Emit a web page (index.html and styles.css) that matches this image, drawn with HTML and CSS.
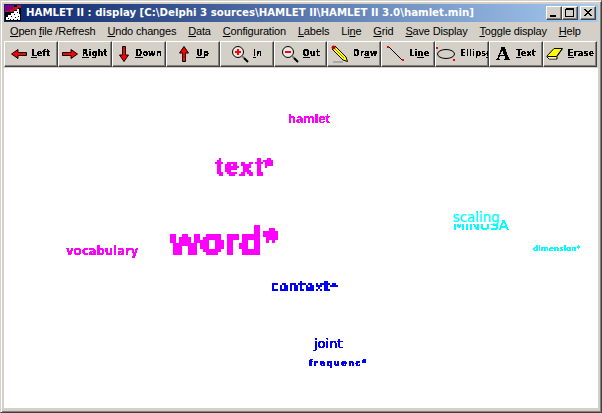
FILE: index.html
```html
<!DOCTYPE html>
<html lang="en">
<head>
<meta charset="utf-8">
<title>HAMLET II</title>
<link rel="stylesheet" href="styles.css">
</head>
<body>
<svg class="defs" width="0" height="0" aria-hidden="true">
  <defs>
    <filter id="hard" x="-5%" y="-5%" width="110%" height="110%" color-interpolation-filters="sRGB">
      <feComponentTransfer><feFuncA type="discrete" tableValues="0 1 1"/></feComponentTransfer>
    </filter>
    <filter id="px2" x="0" y="0" width="100%" height="100%" color-interpolation-filters="sRGB">
      <feFlood x="0" y="0" width="1" height="1" flood-color="#000"/>
      <feComposite width="2" height="2"/>
      <feTile result="grid"/>
      <feComposite in="SourceGraphic" in2="grid" operator="in" result="s"/>
      <feOffset in="s" dx="1" dy="0" result="s1"/>
      <feOffset in="s" dx="0" dy="1" result="s2"/>
      <feOffset in="s" dx="1" dy="1" result="s3"/>
      <feMerge><feMergeNode in="s"/><feMergeNode in="s1"/><feMergeNode in="s2"/><feMergeNode in="s3"/></feMerge>
      <feComponentTransfer><feFuncA type="discrete" tableValues="0 1 1"/></feComponentTransfer>
    </filter>
    <filter id="px3" x="0" y="0" width="100%" height="100%" color-interpolation-filters="sRGB">
      <feFlood x="1" y="1" width="1" height="1" flood-color="#000"/>
      <feComposite width="3" height="3"/>
      <feTile result="grid"/>
      <feComposite in="SourceGraphic" in2="grid" operator="in"/>
      <feMorphology operator="dilate" radius="1"/>
      <feComponentTransfer><feFuncA type="discrete" tableValues="0 1 1"/></feComponentTransfer>
    </filter>
  </defs>
</svg>
<div class="window">
  <header class="titlebar">
    <svg class="appicon" viewBox="0 0 16 16" width="16" height="16">
      <rect width="16" height="16" fill="#000"/>
      <rect x="0" y="0" width="9" height="6" fill="#800080"/>
      <path d="M0 6h5V4h3V2h4V0h4v3h-3v2h-4v2H0z" fill="#c01030"/>
      <path d="M1 15v-3h2v-2h3V8h3V6h3V4h2v5h1v6z" fill="#fff"/>
      <path d="M3 13h1M6 11h1M9 9h1M12 7h1M5 14h1M10 12h1M8 14h1M13 11h1M12 14h1" stroke="#000" fill="none"/>
    </svg>
    <span class="title">HAMLET II : display [C:\Delphi 3 sources\HAMLET II\HAMLET II 3.0\hamlet.min]</span>
    <div class="caps">
      <button class="cap"><svg viewBox="0 0 12 10" width="12" height="10"><rect x="2" y="7" width="6" height="2" fill="#000"/></svg></button>
      <button class="cap"><svg viewBox="0 0 12 10" width="12" height="10"><path d="M1.5 1.5h8v7h-8z M1.5 0.5h8" fill="none" stroke="#000"/></svg></button>
      <button class="cap last"><svg viewBox="0 0 12 10" width="12" height="10"><path d="M2 1l7 7M3 1l7 7M9 1l-7 7M10 1l-7 7" fill="none" stroke="#000" stroke-width="1"/></svg></button>
    </div>
  </header>
  <nav class="menu">
    <span><u>O</u>pen <u>f</u>ile /Refresh</span>
    <span><u>U</u>ndo changes</span>
    <span><u>D</u>ata</span>
    <span><u>C</u>onfiguration</span>
    <span><u>L</u>abels</span>
    <span>Li<u>n</u>e</span>
    <span><u>G</u>rid</span>
    <span><u>S</u>ave Display</span>
    <span><u>T</u>oggle display</span>
    <span><u>H</u>elp</span>
  </nav>
  <div class="toolbar">
    <button class="tool"><svg viewBox="0 0 16 12" width="16" height="12"><path d="M0.5 6L7 1.5V4.5H15.5V7.5H7V10.5Z" fill="#f00" stroke="#000"/></svg><span><u>L</u>eft</span></button>
    <button class="tool"><svg viewBox="0 0 16 12" width="16" height="12"><path d="M15.5 6L9 1.5V4.5H0.5V7.5H9V10.5Z" fill="#f00" stroke="#000"/></svg><span><u>R</u>ight</span></button>
    <button class="tool"><svg viewBox="0 0 16 16" width="16" height="16"><path d="M8 15.5L3.5 9H6.5V0.5H9.5V9H12.5Z" fill="#f00" stroke="#000"/></svg><span><u>D</u>own</span></button>
    <button class="tool"><svg viewBox="0 0 16 16" width="16" height="16"><path d="M8 0.5L3.5 7H6.5V15.5H9.5V7H12.5Z" fill="#f00" stroke="#000"/></svg><span><u>U</u>p</span></button>
    <button class="tool"><svg viewBox="0 0 18 18" width="18" height="18"><circle cx="7" cy="7" r="5.5" fill="#e8e8e8" stroke="#000"/><path d="M11 11l2 2" stroke="#808080" stroke-width="2"/><path d="M13 13l4 4" stroke="#000" stroke-width="2"/><path d="M4 7h6M7 4v6" stroke="#f00" stroke-width="2"/></svg><span><u>I</u>n</span></button>
    <button class="tool"><svg viewBox="0 0 18 18" width="18" height="18"><circle cx="7" cy="7" r="5.5" fill="#e8e8e8" stroke="#000"/><path d="M11 11l2 2" stroke="#808080" stroke-width="2"/><path d="M13 13l4 4" stroke="#000" stroke-width="2"/><path d="M4 7h6" stroke="#f00" stroke-width="2"/></svg><span><u>O</u>ut</span></button>
    <button class="tool"><svg viewBox="0 0 18 18" width="18" height="18"><path d="M1 4l3-3 11 11 1.5 4.5-4.500-1.500z" fill="#ff0" stroke="#000"/><path d="M3 3l10 10" stroke="#a08000"/><path d="M2 17h10" stroke="#808080"/><circle cx="2.500" cy="2.500" r="2" fill="#c00000"/></svg><span>Dr<u>a</u>w</span></button>
    <button class="tool"><svg viewBox="0 0 18 16" width="18" height="16"><path d="M2 1l13 13" stroke="#000"/><rect x="0" y="0" width="2" height="2" fill="#f00"/><rect x="15" y="13" width="2" height="2" fill="#f00"/></svg><span>Li<u>n</u>e</span></button>
    <button class="tool ellipse"><svg viewBox="0 0 20 16" width="20" height="16"><ellipse cx="10" cy="8" rx="8.500" ry="4.500" fill="none" stroke="#000"/><rect x="0" y="1" width="2" height="2" fill="#f00"/><rect x="17" y="13" width="2" height="2" fill="#f00"/></svg><span>Ellips<u>e</u></span></button>
    <button class="tool"><span class="bigA">A</span><span><u>T</u>ext</span></button>
    <button class="tool"><svg viewBox="0 0 18 14" width="18" height="14"><path d="M1 9L8 1.500H16.500L11 9.500V12H3L1 10Z" fill="#ff0" stroke="#000"/><path d="M1.500 9.500H10.500L16 2" fill="none" stroke="#000"/><path d="M2 10.500h8v1H3z" fill="#fff"/></svg><span><u>E</u>rase</span></button>
  </div>
  <main class="canvas">
    <span class="lbl hamlet">hamlet</span>
    <span class="lbl textw">text*</span>
    <span class="lbl wordw">word*</span>
    <span class="lbl vocab">vocabulary</span>
    <span class="lbl minusa">MINUSA</span>
    <span class="lbl scaling">scaling</span>
    <span class="lbl dimension">dimension*</span>
    <span class="lbl context">context*</span>
    <span class="lbl joint">joint</span>
    <span class="lbl frequen">frequenc*</span>
  </main>
</div>
</body>
</html>
```

FILE: styles.css
```css
* { box-sizing: border-box; }
html, body { margin: 0; padding: 0; }
body { width: 602px; height: 413px; overflow: hidden; background: #d4d0c8; font-family: "Liberation Sans", Arial, sans-serif; }
.defs { position: absolute; }
.window {
  width: 602px; height: 413px;
  display: flex; flex-direction: column;
  background: #d4d0c8;
  padding: 4px;
  border: 1px solid #404040;
  border-top-color: #d4d0c8; border-left-color: #d4d0c8;
  box-shadow: inset 1px 1px 0 #fff, inset -1px -1px 0 #808080;
}
.titlebar {
  height: 18px; flex: none;
  margin: -1px -1px 0 -1px;
  display: flex; align-items: center;
  background: linear-gradient(90deg, #0a246a, #a6caf0);
  color: #fff;
  padding: 0 2px 0 1px;
}
.appicon { flex: none; margin-right: 5px; shape-rendering: crispEdges; }
.title { font: bold 10.2px/18px "DejaVu Sans", sans-serif; white-space: nowrap; flex: 1; overflow: hidden; }
.caps { display: flex; flex: none; }
.cap {
  width: 16px; height: 14px; padding: 0; margin: 0;
  display: flex; align-items: center; justify-content: center;
  background: #d4d0c8; border: 1px solid; border-color: #fff #404040 #404040 #fff;
  box-shadow: inset -1px -1px 0 #808080;
}
.cap svg { shape-rendering: crispEdges; }
.cap.last { margin-left: 2px; }
.menu {
  height: 17px; flex: none; margin-top: 1px;
  display: flex; gap: 12px;
  padding-left: 5px;
  font: 11px/17px "Liberation Sans", sans-serif;
  letter-spacing: -0.18px;
  color: #000;
  white-space: nowrap;
}
.toolbar { display: flex; height: 26px; flex: none; margin-top: 1px; margin-left: -1px; }
.tool {
  width: 54px; height: 26px; padding: 0; margin: 0;
  display: flex; align-items: center; justify-content: center; gap: 4px;
  background: #d4d0c8;
  border: 1px solid; border-color: #fff #404040 #404040 #fff;
  box-shadow: inset -1px -1px 0 #808080;
  font: bold 8px/10px "DejaVu Sans", sans-serif;
  letter-spacing: 0.3px;
  color: #000;
  overflow: hidden;
  white-space: nowrap;
}
.tool span { filter: url(#hard); }
.tool.ellipse { justify-content: flex-start; }
.tool svg { flex: none; }
.tool .bigA { font: bold 19px/18px "Liberation Serif", serif; letter-spacing: 0; padding-right: 2px; }
.canvas {
  flex: 1; position: relative;
  margin: 1px -1px 0 -1px;
  background: #fff;
  overflow: hidden;
}
.lbl { position: absolute; white-space: nowrap; font-family: "DejaVu Sans", sans-serif; font-weight: bold; line-height: 1; }
.hamlet { left: 284px; top: 44px; font: bold 13px/1 "Liberation Sans", sans-serif; color: #f0f; filter: url(#hard); }
.textw { left: 211px; top: 86px; font: bold 25px/1 "Liberation Sans", sans-serif; letter-spacing: 1px; -webkit-text-stroke: 0.5px #f0f; color: #f0f; filter: url(#px2); }
.wordw { left: 166px; top: 154px; font: bold 39px/1 "Liberation Sans", sans-serif; -webkit-text-stroke: 1px #f0f; color: #f0f; filter: url(#px3); }
.vocab { left: 62px; top: 178px; font-size: 11.7px; color: #f0f; filter: url(#hard); }
.scaling { left: 449px; top: 144px; height: 12px; font-size: 13.4px; line-height: 12px; background: #fff; color: #0ff; font-weight: normal; -webkit-text-stroke: 0.2px #0ff; filter: url(#hard); }
.minusa { left: 449px; top: 150px; font-size: 14px; color: #0ff; font-weight: normal; -webkit-text-stroke: 0.2px #0ff; filter: url(#hard); }
.dimension { left: 529px; top: 177px; font-size: 7.5px; color: #0ff; filter: url(#hard); }
.context { left: 266px; top: 211px; font-size: 14px; color: #00f; filter: url(#px2); }
.joint { left: 310px; top: 269px; font-size: 13px; color: #00f; font-weight: normal; -webkit-text-stroke: 0.3px #00f; filter: url(#hard); }
.frequen { left: 305px; top: 292px; font-size: 8px; letter-spacing: 1.6px; color: #00f; -webkit-text-stroke: 0.3px #00f; filter: url(#hard); }
```
